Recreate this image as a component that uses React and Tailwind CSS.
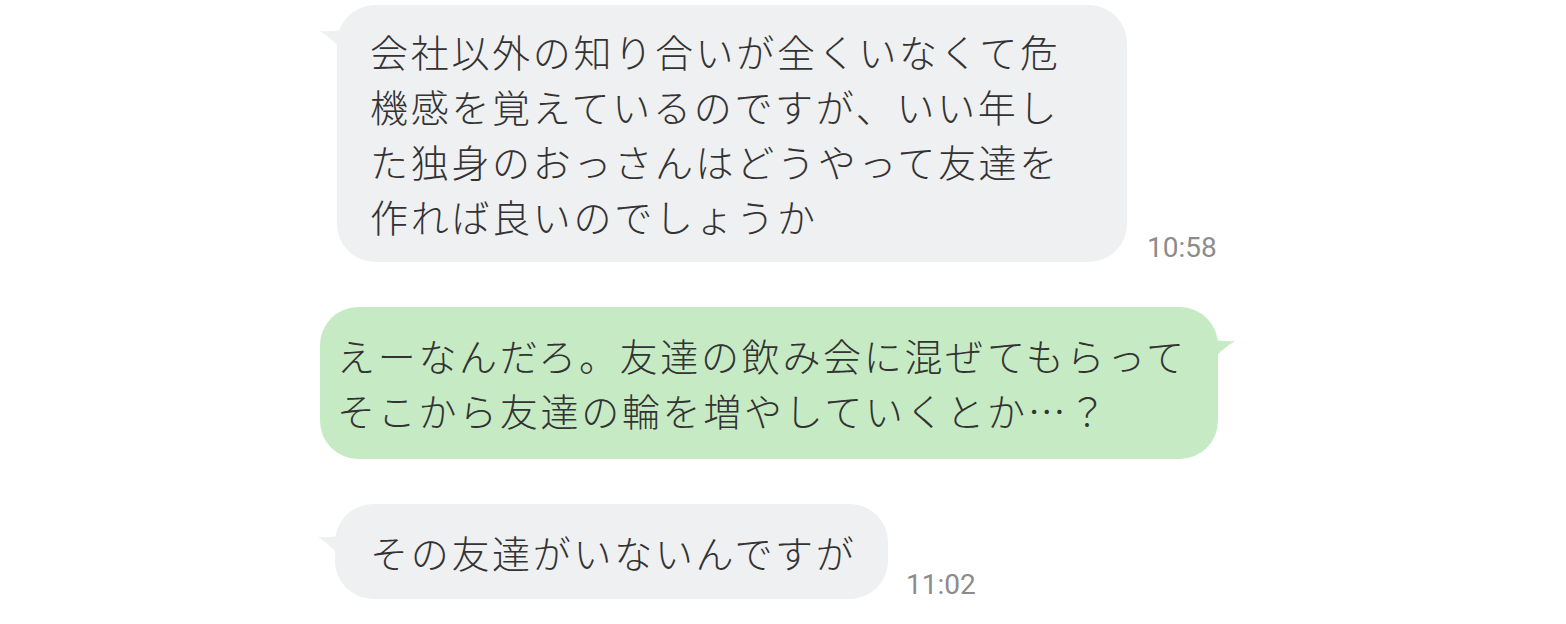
import React from 'react';

const jp = { fontFamily: '"Noto Sans CJK JP", "Noto Sans", sans-serif' };

const TailLeft = ({ color, top }) => (
    <svg className={`absolute left-[-17px] ${top}`} width="26" height="28" viewBox="0 0 26 28">
        <path d="M0 2 Q12 3 26 0 L26 26 Q14 11 0 2 Z" fill={color} />
    </svg>
);

const TailRight = ({ color, top }) => (
    <svg className={`absolute right-[-17px] ${top}`} width="24" height="26" viewBox="0 0 24 26">
        <path d="M24 2 Q12 3 0 0 L0 24 Q10 10 24 2 Z" fill={color} />
    </svg>
);

const Time = ({ children }) => (
    <span className="text-[28px] leading-none text-[#8c8c8c] mb-0" style={{ fontFamily: 'Roboto, "Liberation Sans", sans-serif' }}>
        {children}
    </span>
);

const Lines = ({ lines }) => (
    <div className="text-[38px] leading-[55px] tracking-[2.7px] font-light text-[#333333] whitespace-nowrap" style={jp}>
        {lines.map((l) => (
            <div key={l}>{l}</div>
        ))}
    </div>
);

export default function App() {
    return (
        <div className="w-[1566px] h-[624px] bg-white overflow-hidden pl-[320px] flex flex-col">
            {/* incoming */}
            <div className="mt-[5px] flex items-end gap-[20px] pl-[17px]">
                <div className="relative w-[790px] bg-[#eff0f2] rounded-[38px] pt-[18px] pb-[19px] pl-[33px]">
                    <TailLeft color="#eff0f2" top="top-[24px]" />
                    <Lines
                        lines={[
                            '会社以外の知り合いが全くいなくて危',
                            '機感を覚えているのですが、いい年し',
                            'た独身のおっさんはどうやって友達を',
                            '作れば良いのでしょうか',
                        ]}
                    />
                </div>
                <Time>10:58</Time>
            </div>

            {/* outgoing */}
            <div className="mt-[45px] flex">
                <div className="relative w-[898px] bg-[#c6ebc4] rounded-[38px] pt-[20px] pb-[22px] pl-[17px]">
                    <TailRight color="#c6ebc4" top="top-[32px]" />
                    <Lines
                        lines={[
                            'えーなんだろ。友達の飲み会に混ぜてもらって',
                            'そこから友達の輪を増やしていくとか…？',
                        ]}
                    />
                </div>
            </div>

            {/* incoming */}
            <div className="mt-[45px] flex items-end gap-[18px] pl-[15px]">
                <div className="relative w-[553px] bg-[#eff0f2] rounded-[38px] pt-[20px] pb-[20px] pl-[35px]">
                    <TailLeft color="#eff0f2" top="top-[31px]" />
                    <Lines lines={['その友達がいないんですが']} />
                </div>
                <Time>11:02</Time>
            </div>
        </div>
    );
}
